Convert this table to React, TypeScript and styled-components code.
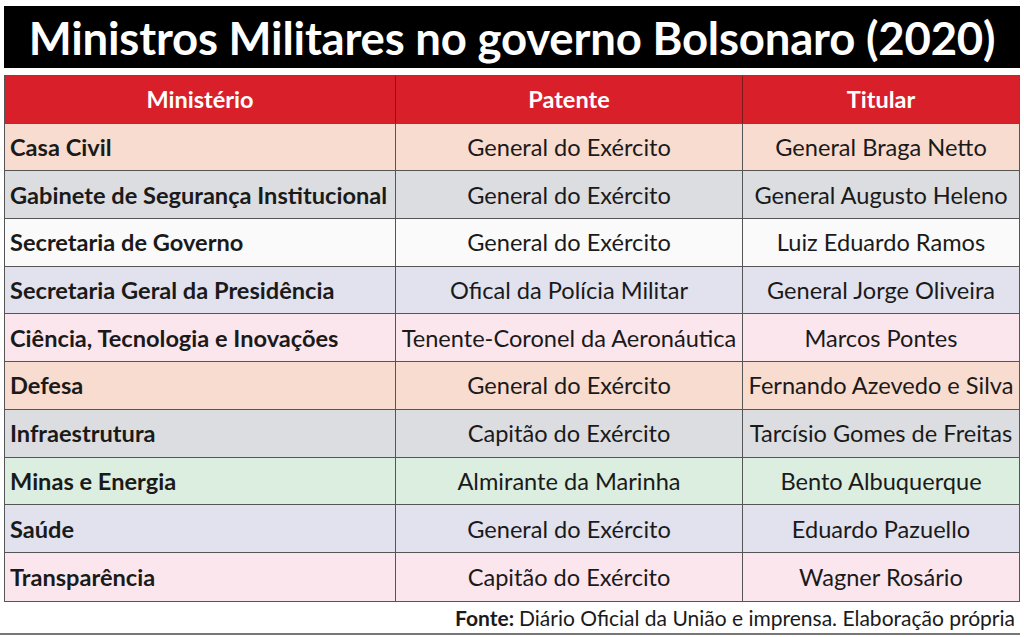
import React from "react";
import styled, { createGlobalStyle } from "styled-components";

const GlobalStyle = createGlobalStyle`
  html, body {
    margin: 0;
    padding: 0;
    background: #ffffff;
  }
  body {
    font-family: "Lato", "Open Sans", sans-serif;
    color: #1a1a1a;
  }
`;

const Page = styled.div`
  width: 1024px;
  height: 637px;
  padding: 6px 4px 0 4px;
  box-sizing: border-box;
  display: flex;
  flex-direction: column;
`;

const TitleBar = styled.div`
  height: 62px;
  background: #000000;
  color: #ffffff;
  display: flex;
  align-items: center;
  justify-content: center;
  font-size: 45.5px;
  font-weight: 700;
  letter-spacing: -0.2px;
`;

const Table = styled.div`
  margin-top: 7px;
  border: 1px solid #555;
  display: grid;
  grid-template-columns: 390px 347px 1fr;
  grid-auto-rows: 47.7px;
`;

const HeadCell = styled.div<{ first?: boolean }>`
  background: #d9202a;
  color: #ffffff;
  font-size: 23.5px;
  font-weight: 700;
  display: flex;
  align-items: center;
  justify-content: center;
  border-left: ${(p) => (p.first ? "none" : "1px solid #7a1a1a")};
  border-bottom: 1px solid #555;
`;

const Cell = styled.div<{ bg: string; bold?: boolean; first?: boolean; last?: boolean }>`
  background: ${(p) => p.bg};
  font-size: 23.6px;
  font-weight: ${(p) => (p.bold ? 700 : 400)};
  display: flex;
  align-items: center;
  justify-content: ${(p) => (p.first ? "flex-start" : "center")};
  padding-left: ${(p) => (p.first ? "5px" : "0")};
  white-space: nowrap;
  border-left: ${(p) => (p.first ? "none" : "1px solid #555")};
  border-bottom: ${(p) => (p.last ? "none" : "1px solid #555")};
`;

const Footer = styled.div`
  height: 31px;
  display: flex;
  align-items: center;
  justify-content: flex-end;
  padding-right: 5px;
  font-size: 21px;
  border-bottom: 2px solid #777;
  margin-left: -4px;
`;

const Strong = styled.b`
  font-weight: 700;
  margin-right: 5px;
`;

const colors: Record<string, string> = {
  peach: "#f8dccf",
  gray: "#dcdde0",
  white: "#fafafa",
  lavender: "#e1e2ee",
  pink: "#fce6ee",
  green: "#dbeedf",
};

const rows: [string, string, string, string][] = [
  ["Casa Civil", "General do Exército", "General Braga Netto", "peach"],
  ["Gabinete de Segurança Institucional", "General do Exército", "General Augusto Heleno", "gray"],
  ["Secretaria de Governo", "General do Exército", "Luiz Eduardo Ramos", "white"],
  ["Secretaria Geral da Presidência", "Ofical da Polícia Militar", "General Jorge Oliveira", "lavender"],
  ["Ciência, Tecnologia e Inovações", "Tenente-Coronel da Aeronáutica", "Marcos Pontes", "pink"],
  ["Defesa", "General do Exército", "Fernando Azevedo e Silva", "peach"],
  ["Infraestrutura", "Capitão do Exército", "Tarcísio Gomes de Freitas", "gray"],
  ["Minas e Energia", "Almirante da Marinha", "Bento Albuquerque", "green"],
  ["Saúde", "General do Exército", "Eduardo Pazuello", "lavender"],
  ["Transparência", "Capitão do Exército", "Wagner Rosário", "pink"],
];

export default function App() {
  return (
    <Page>
      <GlobalStyle />
      <TitleBar>Ministros Militares no governo Bolsonaro (2020)</TitleBar>
      <Table>
        <HeadCell first>Ministério</HeadCell>
        <HeadCell>Patente</HeadCell>
        <HeadCell>Titular</HeadCell>
        {rows.map(([ministry, rank, holder, tone], i) => {
          const last = i === rows.length - 1;
          return (
            <React.Fragment key={ministry}>
              <Cell bg={colors[tone]} bold first last={last}>
                {ministry}
              </Cell>
              <Cell bg={colors[tone]} last={last}>
                {rank}
              </Cell>
              <Cell bg={colors[tone]} last={last}>
                {holder}
              </Cell>
            </React.Fragment>
          );
        })}
      </Table>
      <Footer>
        <Strong>Fonte:</Strong> Diário Oficial da União e imprensa. Elaboração própria
      </Footer>
    </Page>
  );
}
